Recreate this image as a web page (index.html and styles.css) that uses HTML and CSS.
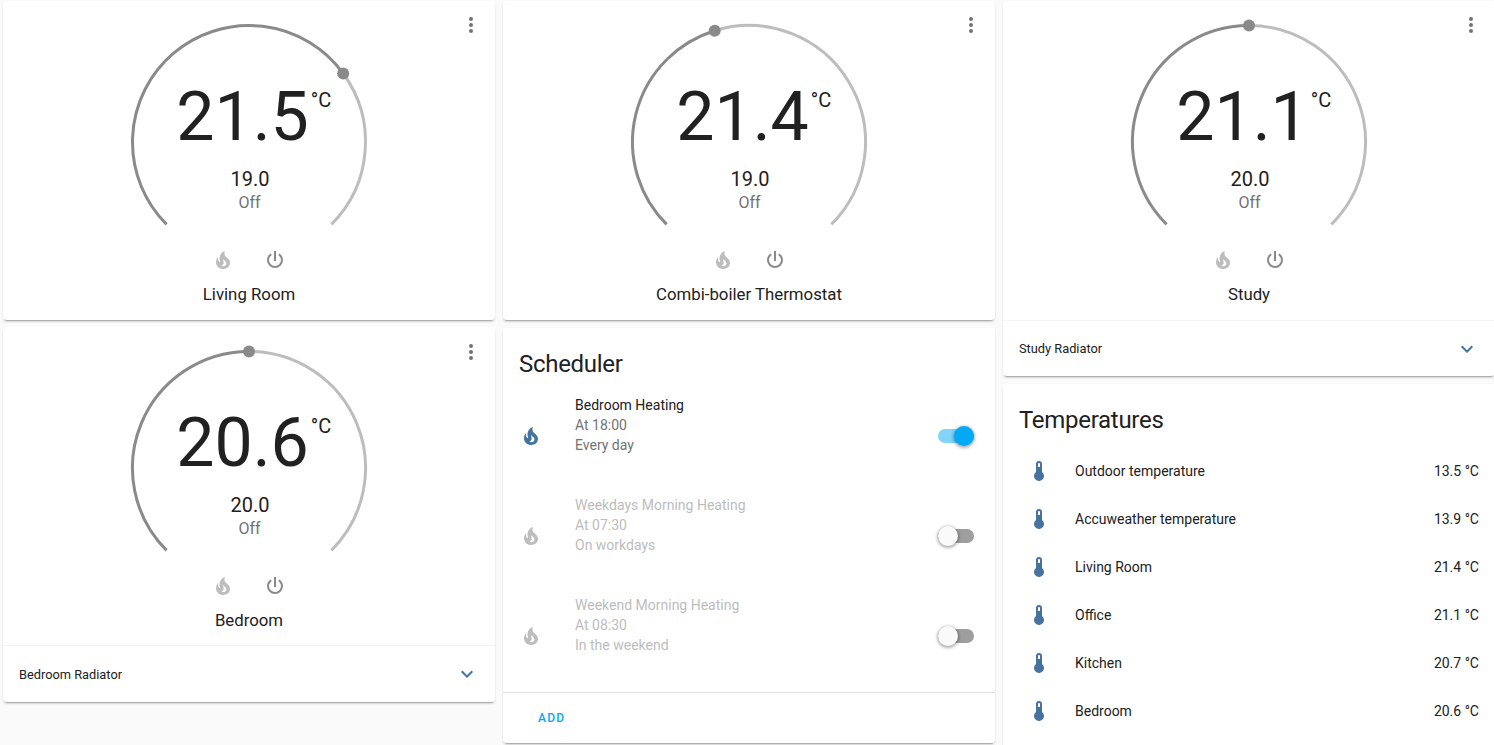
FILE: index.html
```html
<!DOCTYPE html>
<html>
<head>
  <meta charset="UTF-8">
  <title>Heating</title>
  <link rel="stylesheet" href="styles.css">
</head>
<body>
  <svg class="defs" width="0" height="0">
    <defs>
      <path id="fire" d="M17.66 11.2C17.43 10.9 17.15 10.64 16.89 10.38C16.22 9.78 15.46 9.35 14.82 8.72C13.33 7.26 13 4.85 13.95 3C13 3.23 12.17 3.75 11.46 4.32C8.87 6.4 7.85 10.07 9.07 13.22C9.11 13.32 9.15 13.42 9.15 13.55C9.15 13.77 9 13.97 8.8 14.05C8.57 14.15 8.33 14.09 8.14 13.93C8.08 13.88 8.04 13.83 8 13.76C6.87 12.33 6.69 10.28 7.45 8.64C5.78 10 4.87 12.3 5 14.47C5.06 14.97 5.12 15.47 5.29 15.97C5.43 16.57 5.7 17.17 6 17.7C7.08 19.43 8.95 20.67 10.96 20.92C13.1 21.19 15.39 20.8 17.03 19.32C18.86 17.66 19.5 15 18.56 12.72L18.43 12.46C18.22 12 17.66 11.2 17.66 11.2M14.5 17.5C14.22 17.74 13.76 18 13.4 18.1C12.28 18.5 11.16 17.94 10.5 17.28C11.69 17 12.4 16.12 12.61 15.23C12.78 14.43 12.46 13.77 12.33 13C12.21 12.26 12.23 11.63 12.5 10.94C12.69 11.32 12.89 11.7 13.13 12C13.9 13 15.11 13.44 15.37 14.8C15.41 14.94 15.43 15.08 15.43 15.23C15.46 16.05 15.1 16.95 14.5 17.5H14.5Z"/>
      <path id="power" d="M16.56,5.44L15.11,6.89C16.84,7.94 18,9.83 18,12A6,6 0 0,1 12,18A6,6 0 0,1 6,12C6,9.83 7.16,7.94 8.88,6.88L7.44,5.44C5.36,6.88 4,9.28 4,12A8,8 0 0,0 12,20A8,8 0 0,0 20,12C20,9.28 18.64,6.88 16.56,5.44M13,3H11V13H13"/>
      <path id="dots" d="M12,16A2,2 0 0,1 14,18A2,2 0 0,1 12,20A2,2 0 0,1 10,18A2,2 0 0,1 12,16M12,10A2,2 0 0,1 14,12A2,2 0 0,1 12,14A2,2 0 0,1 10,12A2,2 0 0,1 12,10M12,4A2,2 0 0,1 14,6A2,2 0 0,1 12,8A2,2 0 0,1 10,6A2,2 0 0,1 12,4Z"/>
      <path id="chevron" d="M7.41,8.58L12,13.17L16.59,8.58L18,10L12,16L6,10L7.41,8.58Z"/>
      <path id="thermometer" d="M15 13V5A3 3 0 0 0 9 5V13A5 5 0 1 0 15 13M12 4A1 1 0 0 1 13 5V8H11V5A1 1 0 0 1 12 4Z"/>
    </defs>
  </svg>

  <div class="board">

    <!-- column 1 -->
    <div class="column tight">
      <div class="card">
        <svg class="icon menu" viewBox="0 0 24 24"><use href="#dots"/></svg>
        <div class="dial">
          <svg class="ring" viewBox="0 0 240 190">
            <path class="track" d="M214.2 52.5A116.5 116.5 0 0 1 202.4 203.4"/>
            <path class="active" d="M37.6 203.4A116.5 116.5 0 1 1 214.2 52.5"/>
            <circle class="handle" cx="214.2" cy="52.5" r="6"/>
          </svg>
          <div class="readout">
            <div class="current">21.5<span class="unit">°C</span></div>
            <div class="target">19.0</div>
            <div class="mode">Off</div>
          </div>
        </div>
        <div class="controls">
          <svg class="icon fire-off" viewBox="0 0 24 24"><use href="#fire"/></svg>
          <svg class="icon power" viewBox="0 0 24 24"><use href="#power"/></svg>
        </div>
        <div class="name">Living Room</div>
      </div>

      <div class="card">
        <svg class="icon menu" viewBox="0 0 24 24"><use href="#dots"/></svg>
        <div class="dial">
          <svg class="ring" viewBox="0 0 240 190">
            <path class="track" d="M120 4.5A116.5 116.5 0 0 1 202.4 203.4"/>
            <path class="active" d="M37.6 203.4A116.5 116.5 0 0 1 120 4.5"/>
            <circle class="handle" cx="120" cy="4.5" r="6"/>
          </svg>
          <div class="readout">
            <div class="current">20.6<span class="unit">°C</span></div>
            <div class="target">20.0</div>
            <div class="mode">Off</div>
          </div>
        </div>
        <div class="controls">
          <svg class="icon fire-off" viewBox="0 0 24 24"><use href="#fire"/></svg>
          <svg class="icon power" viewBox="0 0 24 24"><use href="#power"/></svg>
        </div>
        <div class="name">Bedroom</div>
        <div class="foldrow">
          <span>Bedroom Radiator</span>
          <svg class="icon chevron" viewBox="0 0 24 24"><use href="#chevron"/></svg>
        </div>
      </div>
    </div>

    <!-- column 2 -->
    <div class="column">
      <div class="card">
        <svg class="icon menu" viewBox="0 0 24 24"><use href="#dots"/></svg>
        <div class="dial">
          <svg class="ring" viewBox="0 0 240 190">
            <path class="track" d="M85.7 9.7A116.5 116.5 0 0 1 202.4 203.4"/>
            <path class="active" d="M37.6 203.4A116.5 116.5 0 0 1 85.7 9.7"/>
            <circle class="handle" cx="85.7" cy="9.7" r="6"/>
          </svg>
          <div class="readout">
            <div class="current">21.4<span class="unit">°C</span></div>
            <div class="target">19.0</div>
            <div class="mode">Off</div>
          </div>
        </div>
        <div class="controls">
          <svg class="icon fire-off" viewBox="0 0 24 24"><use href="#fire"/></svg>
          <svg class="icon power" viewBox="0 0 24 24"><use href="#power"/></svg>
        </div>
        <div class="name">Combi-boiler Thermostat</div>
      </div>

      <div class="card">
        <div class="cardtitle">Scheduler</div>
        <div class="schedules">
          <div class="schedule">
            <svg class="icon fire-on" viewBox="0 0 24 24"><use href="#fire"/></svg>
            <div class="lines">
              <div class="title">Bedroom Heating</div>
              <div>At 18:00</div>
              <div>Every day</div>
            </div>
            <div class="toggle on"><div class="thumb"></div></div>
          </div>
          <div class="schedule disabled">
            <svg class="icon fire-off" viewBox="0 0 24 24"><use href="#fire"/></svg>
            <div class="lines">
              <div class="title">Weekdays Morning Heating</div>
              <div>At 07:30</div>
              <div>On workdays</div>
            </div>
            <div class="toggle"><div class="thumb"></div></div>
          </div>
          <div class="schedule disabled">
            <svg class="icon fire-off" viewBox="0 0 24 24"><use href="#fire"/></svg>
            <div class="lines">
              <div class="title">Weekend Morning Heating</div>
              <div>At 08:30</div>
              <div>In the weekend</div>
            </div>
            <div class="toggle"><div class="thumb"></div></div>
          </div>
        </div>
        <div class="actions"><span class="add">ADD</span></div>
      </div>
    </div>

    <!-- column 3 -->
    <div class="column">
      <div class="card">
        <svg class="icon menu" viewBox="0 0 24 24"><use href="#dots"/></svg>
        <div class="dial">
          <svg class="ring" viewBox="0 0 240 190">
            <path class="track" d="M120 4.5A116.5 116.5 0 0 1 202.4 203.4"/>
            <path class="active" d="M37.6 203.4A116.5 116.5 0 0 1 120 4.5"/>
            <circle class="handle" cx="120" cy="4.5" r="6"/>
          </svg>
          <div class="readout">
            <div class="current">21.1<span class="unit">°C</span></div>
            <div class="target">20.0</div>
            <div class="mode">Off</div>
          </div>
        </div>
        <div class="controls">
          <svg class="icon fire-off" viewBox="0 0 24 24"><use href="#fire"/></svg>
          <svg class="icon power" viewBox="0 0 24 24"><use href="#power"/></svg>
        </div>
        <div class="name">Study</div>
        <div class="foldrow">
          <span>Study Radiator</span>
          <svg class="icon chevron" viewBox="0 0 24 24"><use href="#chevron"/></svg>
        </div>
      </div>

      <div class="card">
        <div class="cardtitle">Temperatures</div>
        <div class="sensors">
          <div class="sensor">
            <svg class="icon fire-on" viewBox="0 0 24 24"><use href="#thermometer"/></svg>
            <span class="label">Outdoor temperature</span><span>13.5 °C</span>
          </div>
          <div class="sensor">
            <svg class="icon fire-on" viewBox="0 0 24 24"><use href="#thermometer"/></svg>
            <span class="label">Accuweather temperature</span><span>13.9 °C</span>
          </div>
          <div class="sensor">
            <svg class="icon fire-on" viewBox="0 0 24 24"><use href="#thermometer"/></svg>
            <span class="label">Living Room</span><span>21.4 °C</span>
          </div>
          <div class="sensor">
            <svg class="icon fire-on" viewBox="0 0 24 24"><use href="#thermometer"/></svg>
            <span class="label">Office</span><span>21.1 °C</span>
          </div>
          <div class="sensor">
            <svg class="icon fire-on" viewBox="0 0 24 24"><use href="#thermometer"/></svg>
            <span class="label">Kitchen</span><span>20.7 °C</span>
          </div>
          <div class="sensor">
            <svg class="icon fire-on" viewBox="0 0 24 24"><use href="#thermometer"/></svg>
            <span class="label">Bedroom</span><span>20.6 °C</span>
          </div>
        </div>
      </div>
    </div>

  </div>
</body>
</html>
```

FILE: styles.css
```css
html, body {
  height: 100%;
  margin: 0;
  overflow: hidden;
}

body {
  background-color: #fafafa;
  color: #212121;
  font-family: Roboto, "Liberation Sans", sans-serif;
  font-size: 14px;
}

.defs {
  display: block;
  height: 0;
}

.board {
  display: grid;
  grid-template-columns: repeat(3, 492px);
  column-gap: 8px;
  padding: 1px 0 0 3px;
}

.column {
  display: flex;
  flex-direction: column;
  gap: 8px;
}

.column.tight {
  gap: 7px;
}

.card {
  position: relative;
  background-color: #fff;
  border-radius: 4px;
  box-shadow: 0 2px 2px 0 rgba(0, 0, 0, .14), 0 1px 5px -4px rgba(0, 0, 0, .12), 0 3px 1px -2px rgba(0, 0, 0, .2);
}

.icon {
  display: block;
  flex: none;
  width: 24px;
  height: 24px;
  fill: currentColor;
}

.menu {
  position: absolute;
  top: 12px;
  right: 12px;
  color: #727272;
}

.tight .card + .card .menu {
  top: 13px;
}

/* thermostat */

.dial {
  display: grid;
  justify-items: center;
  height: 210px;
  padding-top: 20px;
  box-sizing: border-box;
}

.ring, .readout {
  grid-area: 1 / 1;
}

.ring {
  width: 240px;
  height: 190px;
  overflow: visible;
}

.ring path {
  fill: none;
  stroke-width: 3;
}

.track {
  stroke: #bdbdbd;
}

.active {
  stroke: #8a8a8a;
}

.handle {
  fill: #8a8a8a;
}

.readout {
  text-align: center;
  padding-top: 58px;
}

.current {
  position: relative;
  padding-right: 13px;
  font-size: 68px;
  line-height: 76px;
}

.unit {
  position: absolute;
  top: 9px;
  left: 100%;
  margin-left: -11px;
  font-size: 20px;
  line-height: 24px;
}

.target {
  margin-top: 12px;
  padding-left: 2px;
  font-size: 20px;
  line-height: 24px;
}

.mode {
  padding-left: 1px;
  font-size: 16px;
  line-height: 24px;
  color: #727272;
}

.controls {
  display: flex;
  justify-content: center;
  gap: 28px;
  margin-top: 37px;
}

.fire-off {
  color: #bdbdbd;
}

.fire-on {
  color: #44739e;
}

.power {
  color: #8a8a8a;
}

.name {
  margin-top: 10px;
  padding-bottom: 14px;
  font-size: 16.8px;
  line-height: 24px;
  text-align: center;
}

.foldrow {
  display: flex;
  align-items: center;
  justify-content: space-between;
  height: 56px;
  padding: 0 16px;
  border-top: 1px solid #f3f3f3;
  font-size: 12.8px;
  box-sizing: border-box;
}

.tight .foldrow {
  height: 57px;
  margin-top: -1px;
}

.chevron {
  color: #44739e;
}

/* entity cards */

.cardtitle {
  padding: 20px 16px 0;
  font-size: 24px;
  letter-spacing: -0.288px;
  line-height: 32px;
}

.schedules {
  padding: 15px 16px 37px;
}

.schedule {
  display: flex;
  height: 60px;
  margin-bottom: 40px;
  line-height: 20px;
  color: #727272;
}

.schedule:last-child {
  margin-bottom: 0;
}

.schedule .icon {
  margin: 29px 16px 0 0;
}

.lines {
  flex: 1;
  margin-left: 16px;
}

.title {
  color: #212121;
}

.disabled, .disabled .title {
  color: #bdbdbd;
}

.toggle {
  position: relative;
  align-self: center;
  width: 36px;
  height: 14px;
  margin: 22px 5px 0 0;
  border-radius: 7px;
  background-color: #9e9e9e;
}

.toggle.on {
  background-color: #81d4fa;
}

.thumb {
  position: absolute;
  top: -3px;
  left: 0;
  width: 20px;
  height: 20px;
  border-radius: 50%;
  background-color: #fafafa;
  box-shadow: 0 1px 3px 1px rgba(0, 0, 0, .3);
}

.on .thumb {
  left: 16px;
  background-color: #03a9f4;
}

.actions {
  display: flex;
  align-items: center;
  height: 50px;
  padding-left: 35px;
  border-top: 1px solid #e0e0e0;
}

.add {
  font-size: 12px;
  font-weight: 500;
  letter-spacing: 1.25px;
  color: #03a9f4;
}

.sensors {
  padding: 11px 16px 16px;
}

.sensor {
  display: flex;
  align-items: center;
  height: 48px;
}

.sensor .icon {
  margin: 0 24px 0 8px;
}

.label {
  flex: 1;
}
```
